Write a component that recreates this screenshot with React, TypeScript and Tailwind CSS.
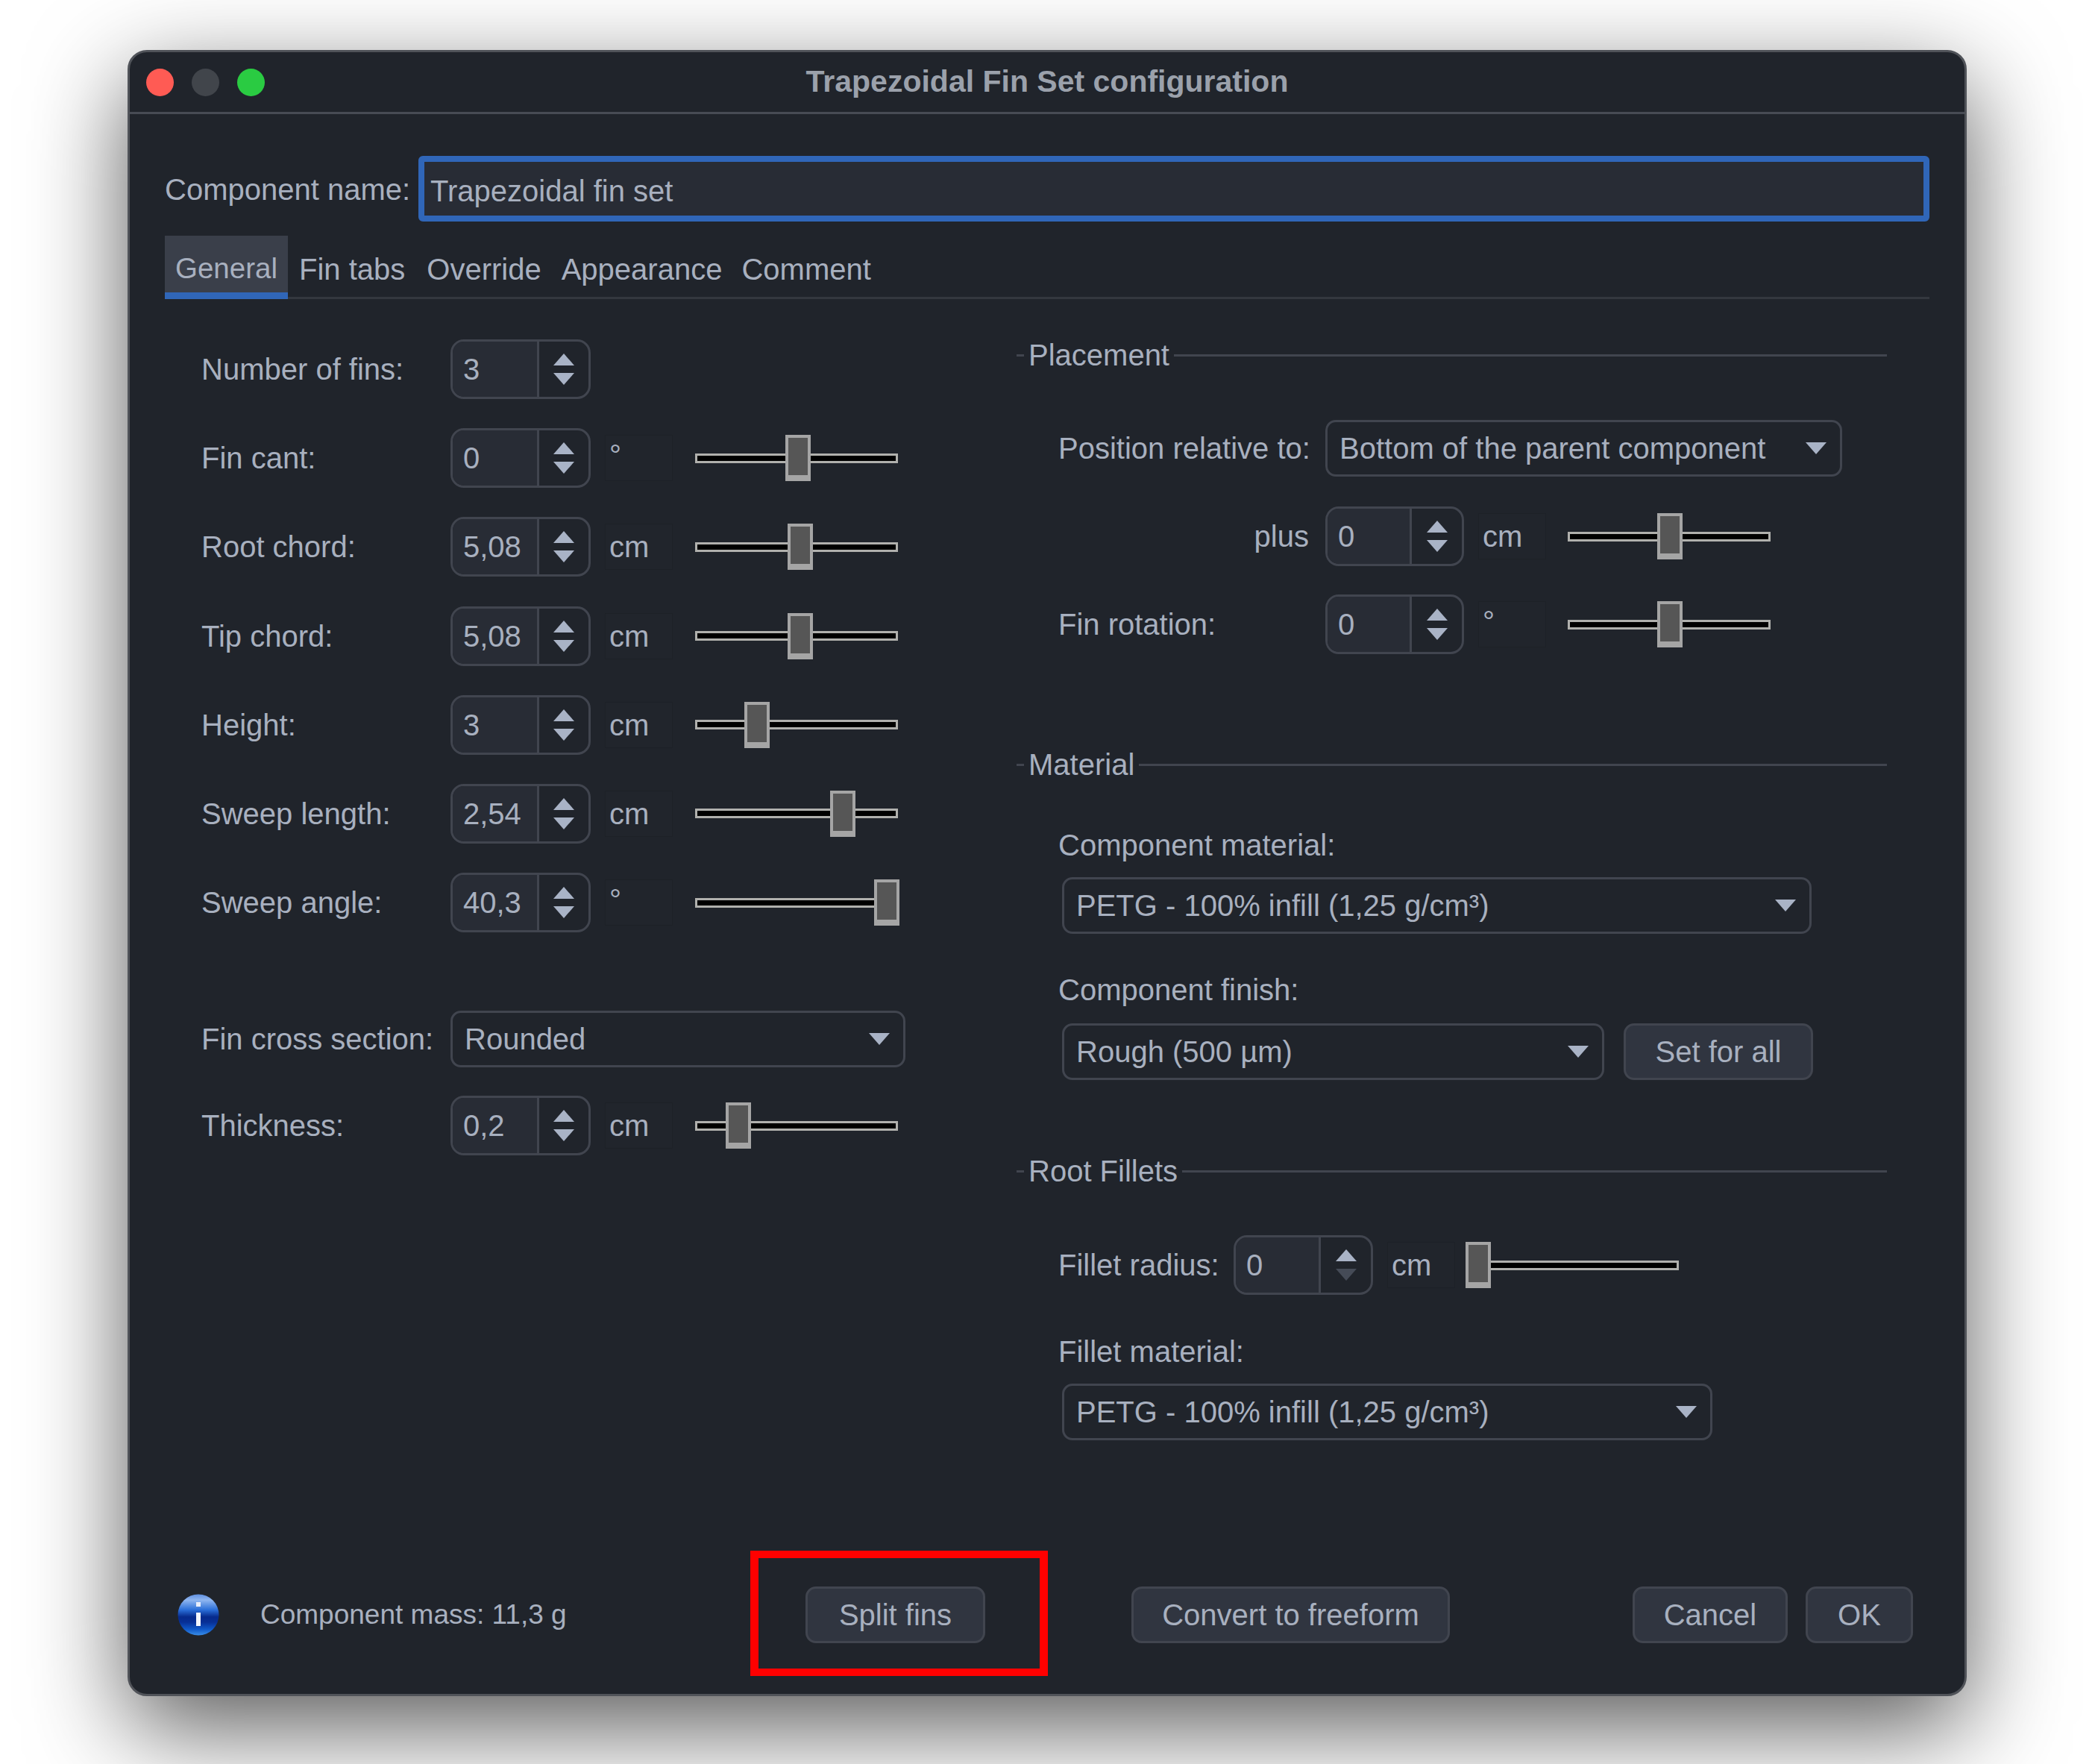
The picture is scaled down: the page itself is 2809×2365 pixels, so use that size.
const fieldText = "text-[40px] leading-[46px] text-[#a8b0bf] whitespace-nowrap";

function Triangle({ down, dim, className }: { down?: boolean; dim?: boolean; className?: string }) {
  return (
    <svg width="28" height="16" viewBox="0 0 28 16" className={className}>
      <polygon points={down ? "0,0 28,0 14,16" : "14,0 28,16 0,16"} fill={dim ? "#454b57" : "#a9b3c6"} />
    </svg>
  );
}

function Spinner({ value, width = 188, inputWidth = 113, dimDown }: { value: string; width?: number; inputWidth?: number; dimDown?: boolean }) {
  return (
    <div className="flex h-[80px] shrink-0 rounded-[18px] border-[3px] border-[#41454f] overflow-hidden" style={{ width }}>
      <div className={`bg-[#282c35] pl-[14px] flex items-center ${fieldText}`} style={{ width: inputWidth }}>{value}</div>
      <div className="flex-1 border-l-[3px] border-[#41454f] flex flex-col items-center justify-center gap-[10px]">
        <Triangle />
        <Triangle down dim={dimDown} />
      </div>
    </div>
  );
}

function UnitBox({ unit }: { unit: string }) {
  return (
    <div className={`ml-[19px] w-[91px] h-[62px] shrink-0 border border-[#1d2127] bg-[#21252c] pl-[5px] flex items-center ${fieldText}`}>
      {unit === "°" ? <span className="-mt-[8px]">°</span> : unit}
    </div>
  );
}

function Slider({ thumb, width = 272, gap = 30 }: { thumb: number; width?: number; gap?: number }) {
  return (
    <div className="relative h-[62px] shrink-0 flex items-center" style={{ width, marginLeft: gap }}>
      <div className="w-full h-[13px] bg-black border-[3px] border-[#b0b0ad]" />
      <div
        className="absolute top-0 w-[34px] h-[62px] bg-[#565656] border-x-[4px] border-t-[4px] border-b-[8px] border-[#a5a5a5]"
        style={{ left: thumb }}
      />
    </div>
  );
}

function Select({ value, width }: { value: string; width: number }) {
  return (
    <div className="relative h-[76px] shrink-0 rounded-[14px] border-[3px] border-[#41454f] pl-[16px] flex items-center" style={{ width }}>
      <span className={fieldText}>{value}</span>
      <Triangle down className="absolute top-[27px] right-[18px]" />
    </div>
  );
}

function Btn({ label, width }: { label: string; width: number }) {
  return (
    <div className={`h-[76px] shrink-0 rounded-[14px] border-[3px] border-[#41454f] bg-[#303540] flex items-center justify-center ${fieldText}`} style={{ width }}>
      {label}
    </div>
  );
}

function GroupTitle({ title, className }: { title: string; className?: string }) {
  return (
    <div className={`flex items-center h-[46px] ${className ?? ""}`}>
      <div className="w-[10px] h-[3px] bg-[#41454f]" />
      <span className={`pl-[6px] pr-[6px] ${fieldText}`}>{title}</span>
      <div className="flex-1 h-[3px] bg-[#41454f]" />
    </div>
  );
}

function FinRow({ label, value, unit, thumb }: { label: string; value: string; unit?: string; thumb?: number }) {
  return (
    <div className="flex items-center h-[80px]">
      <span className={`w-[334px] shrink-0 ${fieldText}`}>{label}</span>
      <Spinner value={value} />
      {unit && <UnitBox unit={unit} />}
      {thumb !== undefined && <Slider thumb={thumb} />}
    </div>
  );
}

const finRows = [
  { label: "Number of fins:", value: "3" },
  { label: "Fin cant:", value: "0", unit: "°", thumb: 121 },
  { label: "Root chord:", value: "5,08", unit: "cm", thumb: 124 },
  { label: "Tip chord:", value: "5,08", unit: "cm", thumb: 124 },
  { label: "Height:", value: "3", unit: "cm", thumb: 66 },
  { label: "Sweep length:", value: "2,54", unit: "cm", thumb: 181 },
  { label: "Sweep angle:", value: "40,3", unit: "°", thumb: 240 },
];

function InfoIcon() {
  return (
    <svg width="56" height="56" viewBox="0 0 56 56" className="mt-[58px] shrink-0">
      <defs>
        <linearGradient id="orb" x1="0" y1="0" x2="0" y2="1">
          <stop offset="0" stopColor="#5f8fe0" />
          <stop offset="0.14" stopColor="#8fb6f0" />
          <stop offset="0.38" stopColor="#2a6ed8" />
          <stop offset="0.55" stopColor="#062a8c" />
          <stop offset="0.68" stopColor="#072f96" />
          <stop offset="0.85" stopColor="#0f58c8" />
          <stop offset="1" stopColor="#3a8ee8" />
        </linearGradient>
      </defs>
      <circle cx="28" cy="28" r="27.5" fill="url(#orb)" />
      <rect x="25" y="11" width="6" height="6" fill="#e8eefb" />
      <rect x="25" y="25" width="6" height="18" fill="#f2f5fc" />
    </svg>
  );
}

export default function App() {
  return (
    <div className="w-[2809px] h-[2365px] bg-white pt-[67px] pl-[171px] overflow-hidden [font-family:'Liberation_Sans',Arial,sans-serif]">
      <div className="w-[2466px] h-[2207px] flex flex-col rounded-[26px] bg-[#20242b] border-[3px] border-[#505359] shadow-[0_42px_130px_rgba(0,0,0,0.65)]">
        {/* title bar */}
        <div className="relative h-[83px] shrink-0 border-b-[3px] border-[#474b54] flex items-center justify-center">
          <div className="absolute left-[22px] top-[22px] flex gap-[24px]">
            <div className="w-[37px] h-[37px] rounded-full bg-[#ff5b54]" />
            <div className="w-[37px] h-[37px] rounded-full bg-[#41454b]" />
            <div className="w-[37px] h-[37px] rounded-full bg-[#2acb42]" />
          </div>
          <span className="text-[41px] font-bold text-[#9ba1ab] whitespace-nowrap">Trapezoidal Fin Set configuration</span>
        </div>

        {/* name + tabs */}
        <div className="px-[47px] pt-[56px] shrink-0">
          <div className="flex items-center h-[88px]">
            <span className={`w-[340px] shrink-0 pt-[2px] ${fieldText}`}>Component name:</span>
            <div className={`flex-1 h-[88px] rounded-[6px] border-[8px] border-[#3066b8] bg-[#282c35] pl-[8px] pt-[6px] flex items-center ${fieldText}`}>
              Trapezoidal fin set
            </div>
          </div>
          <div className="mt-[19px] h-[85px] flex items-stretch border-b-[3px] border-[#34383f]">
            <div className="w-[165px] -mb-[3px] bg-[#3a3f4a] border-b-[9px] border-[#3066b8] flex items-center justify-center pt-[11px] text-[38.5px] leading-[46px] text-[#a8b0bf] whitespace-nowrap">General</div>
            <div className={`ml-[15px] pt-[8px] flex items-center ${fieldText}`}>Fin tabs</div>
            <div className={`ml-[29px] pt-[8px] flex items-center ${fieldText}`}>Override</div>
            <div className={`ml-[27px] pt-[8px] flex items-center ${fieldText}`}>Appearance</div>
            <div className={`ml-[26px] pt-[8px] flex items-center ${fieldText}`}>Comment</div>
          </div>
        </div>

        {/* panels */}
        <div className="flex-1 flex min-h-0">
          <div className="w-[1189px] shrink-0 pl-[96px] pt-[54px]">
            <div className="flex flex-col gap-[39.2px]">
              {finRows.map((row) => (
                <FinRow key={row.label} {...row} />
              ))}
            </div>
            <div className="mt-[105px] flex items-center h-[76px]">
              <span className={`w-[334px] shrink-0 ${fieldText}`}>Fin cross section:</span>
              <Select value="Rounded" width={610} />
            </div>
            <div className="mt-[38px]">
              <FinRow label="Thickness:" value="0,2" unit="cm" thumb={41} />
            </div>
          </div>

          <div className="w-[1167px] shrink-0 pt-[52px]">
            <GroupTitle title="Placement" />
            <div className="pl-[56px]">
              <div className="mt-[64px] flex items-center">
                <span className={`w-[358px] shrink-0 ${fieldText}`}>Position relative to:</span>
                <Select value="Bottom of the parent component" width={693} />
              </div>
              <div className="mt-[40px] flex items-center">
                <span className={`w-[336px] mr-[22px] shrink-0 text-right ${fieldText}`}>plus</span>
                <Spinner value="0" width={186} inputWidth={110} />
                <UnitBox unit="cm" />
                <Slider thumb={120} width={272} gap={29} />
              </div>
              <div className="mt-[38px] flex items-center">
                <span className={`w-[358px] shrink-0 ${fieldText}`}>Fin rotation:</span>
                <Spinner value="0" width={186} inputWidth={110} />
                <UnitBox unit="°" />
                <Slider thumb={120} width={272} gap={29} />
              </div>
            </div>

            <GroupTitle title="Material" className="mt-[125px]" />
            <div className="pl-[56px]">
              <div className={`mt-[62px] ${fieldText}`}>Component material:</div>
              <div className="mt-[20px] ml-[5px]">
                <Select value="PETG - 100% infill (1,25 g/cm³)" width={1005} />
              </div>
              <div className={`mt-[52px] ${fieldText}`}>Component finish:</div>
              <div className="mt-[22px] ml-[5px] flex gap-[26px]">
                <Select value="Rough (500 µm)" width={727} />
                <Btn label="Set for all" width={254} />
              </div>
            </div>

            <GroupTitle title="Root Fillets" className="mt-[99px]" />
            <div className="pl-[56px]">
              <div className="mt-[63px] flex items-center">
                <span className={`w-[235px] shrink-0 ${fieldText}`}>Fillet radius:</span>
                <Spinner value="0" width={187} inputWidth={111} dimDown />
                <UnitBox unit="cm" />
                <Slider thumb={0} width={286} gap={14} />
              </div>
              <div className={`mt-[53px] ${fieldText}`}>Fillet material:</div>
              <div className="mt-[20px] ml-[5px]">
                <Select value="PETG - 100% infill (1,25 g/cm³)" width={872} />
              </div>
            </div>
          </div>
        </div>

        {/* footer */}
        <div className="h-[168px] mb-[24px] shrink-0 pl-[64px] flex items-start">
          <InfoIcon />
          <div className="mt-[48px] h-[76px] ml-[55px] w-[657px] shrink-0 flex items-center text-[37px] leading-[46px] text-[#a8b0bf] whitespace-nowrap">Component mass: 11,3 g</div>
          <div className="w-[399px] h-[168px] shrink-0 border-x-[11px] border-y-[10px] border-[#ff0000] pl-[63px] pt-[38px]">
            <Btn label="Split fins" width={241} />
          </div>
          <div className="mt-[48px] ml-[112px]"><Btn label="Convert to freeform" width={427} /></div>
          <div className="mt-[48px] ml-[245px]"><Btn label="Cancel" width={208} /></div>
          <div className="mt-[48px] ml-[24px]"><Btn label="OK" width={144} /></div>
        </div>
      </div>
    </div>
  );
}
